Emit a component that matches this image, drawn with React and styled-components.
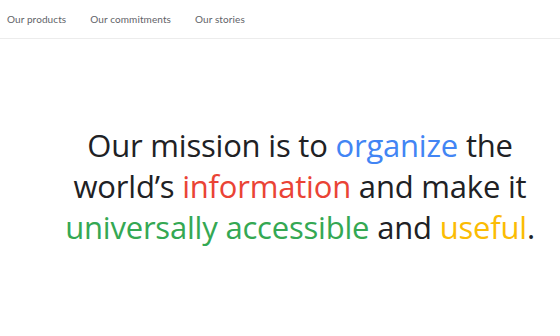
import styled, { createGlobalStyle } from 'styled-components';

const Global = createGlobalStyle`
    body {
        margin: 0;
        background: #ffffff;
        font-family: "Open Sans", "Liberation Sans", sans-serif;
    }
`;

export default function App() {
    return (
        <Page>
            <Global />
            <Nav>
                <NavLink>Our products</NavLink>
                <NavLink>Our commitments</NavLink>
                <NavLink>Our stories</NavLink>
            </Nav>
            <Hero>
                <Mission>
                    Our mission is to <Word color='#4285f4'>organize</Word> the<br />
                    world’s <Word color='#ea4335'>information</Word> and make it<br />
                    <Word color='#34a853'>universally accessible</Word> and <Word color='#fbbc04'>useful</Word>.
                </Mission>
            </Hero>
        </Page>
    );
}

const Page = styled.div`
    width: 560px;
    height: 336px;
    overflow: hidden;
`;

const Nav = styled.nav`
    height: 39px;
    display: flex;
    align-items: center;
    gap: 24px;
    padding-left: 7px;
    border-bottom: 1px solid #ececec;
    box-sizing: border-box;
`;

const NavLink = styled.a`
    font-family: Lato, "Open Sans", sans-serif;
    font-size: 10px;
    color: #5f6368;
    letter-spacing: 0.1px;
`;

const Hero = styled.section`
    display: flex;
    justify-content: center;
    padding: 86px 0 0 40px;
`;

const Mission = styled.h1`
    margin: 0;
    font-size: 31px;
    font-weight: 400;
    line-height: 41px;
    text-align: center;
    color: #202124;
    letter-spacing: -0.2px;
`;

const Word = styled.span`
    color: ${p => p.color};
`;
